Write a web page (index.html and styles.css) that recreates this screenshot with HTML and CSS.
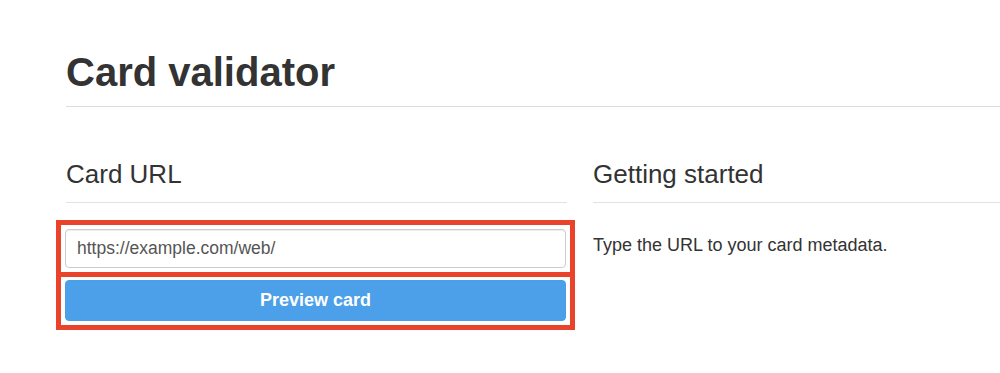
FILE: index.html
```html
<!DOCTYPE html>
<html lang="en">
<head>
<meta charset="utf-8">
<title>Card validator</title>
<link rel="stylesheet" href="styles.css">
</head>
<body>
<div class="page">
  <h1 class="page-title">Card validator</h1>
  <div class="columns">
    <section class="col col-main">
      <h3 class="col-title">Card URL</h3>
      <form class="url-form">
        <div class="cell cell-input">
          <input class="url-input" type="text" value="https://example.com/web/">
        </div>
        <div class="cell cell-button">
          <button class="preview-btn" type="button">Preview card</button>
        </div>
      </form>
    </section>
    <section class="col col-side">
      <h3 class="col-title">Getting started</h3>
      <p class="help">Type the URL to your card metadata.</p>
    </section>
  </div>
</div>
</body>
</html>
```

FILE: styles.css
```css
html, body {
  margin: 0;
  padding: 0;
  background: #ffffff;
}

body {
  font-family: "Liberation Sans", Arial, Helvetica, sans-serif;
  color: #333333;
}

.page {
  padding: 50px 0 0 66px;
}

.page-title {
  margin: 0;
  font-size: 40px;
  line-height: 44px;
  font-weight: 700;
  color: #333333;
  padding-bottom: 12px;
  border-bottom: 1px solid #dddddd;
}

.columns {
  display: flex;
  gap: 26px;
  margin-top: 52px;
}

.col-main {
  width: 501px;
  flex: none;
}

.col-side {
  flex: 1;
  min-width: 0;
}

.col-title {
  margin: 0;
  font-size: 26px;
  line-height: 30px;
  font-weight: 400;
  color: #333333;
  padding-bottom: 13px;
  border-bottom: 1px solid #e2e2e2;
}

.url-form {
  margin: 17px 0 0 -10px;
  width: 509px;
  border: 5px solid #e9432b;
}

.cell {
  padding: 4px;
  background: #ffffff;
}

.cell-button {
  border-top: 5px solid #e9432b;
  padding: 3px 4px 4px;
}

.url-input {
  display: block;
  box-sizing: border-box;
  width: 100%;
  height: 39px;
  margin: 0;
  padding: 0 11px;
  border: 1px solid #cccccc;
  border-radius: 4px;
  box-shadow: inset 0 1px 1px rgba(0, 0, 0, 0.075);
  font-family: "Liberation Sans", Arial, Helvetica, sans-serif;
  font-size: 17.5px;
  color: #555555;
  background: #ffffff;
}

.preview-btn {
  display: block;
  box-sizing: border-box;
  width: 100%;
  height: 41px;
  margin: 0;
  border: 1px solid #4a9de6;
  border-radius: 4px;
  background: #4c9fe9;
  color: #ffffff;
  font-family: "Liberation Sans", Arial, Helvetica, sans-serif;
  font-size: 18px;
  font-weight: 700;
  cursor: pointer;
}

.help {
  margin: 30px 0 0;
  font-size: 18px;
  line-height: 24px;
  color: #333333;
}
```
